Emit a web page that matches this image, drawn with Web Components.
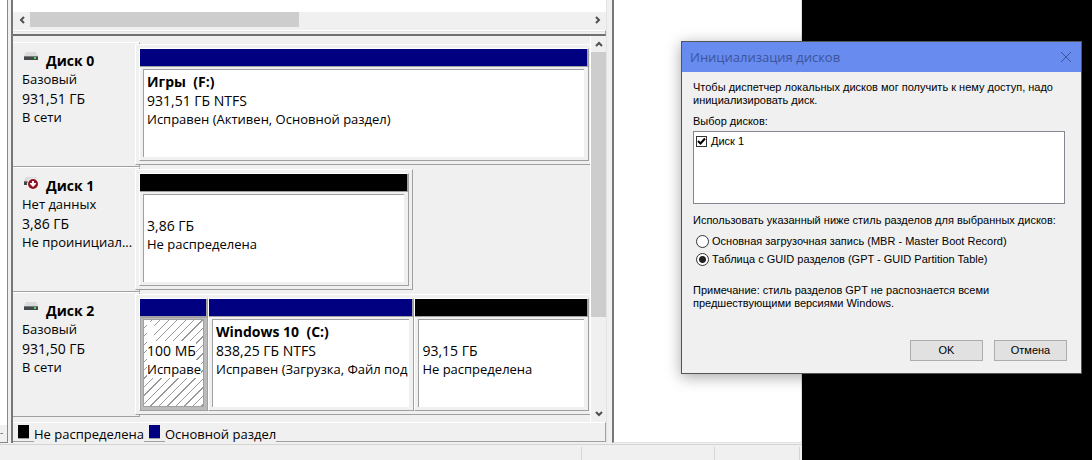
<!DOCTYPE html>
<html lang="ru">
<head>
<meta charset="utf-8">
<title>Управление дисками</title>
<style>
html, body { height: 100%; margin: 0; }
body { background: #000; color: #000; font: 13px/19px "Open Sans", "Noto Sans", sans-serif; overflow: hidden; }
</style>
</head>
<body>
<disk-desktop></disk-desktop>
<script>
function define(name, html, setup) {
  const template = document.createElement('template');
  template.innerHTML = '<style>*{box-sizing:border-box}:host{box-sizing:border-box}</style>' + html;
  customElements.define(name, class extends HTMLElement {
    connectedCallback() {
      if (this.shadowRoot) return;
      this.attachShadow({ mode: 'open' }).append(template.content.cloneNode(true));
      if (setup) setup(this, this.shadowRoot);
    }
  });
}

define('scroll-bar', `
<style>
:host { display: flex; background: #f0f0f0; }
:host([vertical]) { flex-direction: column; width: 16px; border-left: 1px solid #fff; }
button { flex: none; display: grid; place-items: center; width: 17px; height: 15px; padding: 0; border: 0; background: none; }
:host([vertical]) button { width: 15px; height: 16px; }
.thumb { background: #cdcdcd; flex: var(--thumb, 1); }
.rest { flex: var(--rest, 1); }
svg { fill: none; stroke: #505050; stroke-width: 2; }
:host([vertical]) svg { transform: rotate(90deg); }
</style>
<button aria-label="Назад"><svg width="8" height="8"><path d="M6 1L3 4L6 7"/></svg></button>
<div class="thumb"></div><div class="rest"></div>
<button aria-label="Вперёд"><svg width="8" height="8"><path d="M2 1L5 4L2 7"/></svg></button>`);

define('drive-icon', `
<style>
:host { display: block; width: 14px; height: 10px; }
svg { display: block; overflow: visible; }
.alert { display: none; }
:host([offline]) .alert { display: block; }
</style>
<svg width="14" height="10" viewBox="0 0 14 10">
<path d="M2 0H12L14 4H0Z" fill="#d9dbdc"/>
<rect y="4" width="14" height="4" fill="#44484b"/><rect y="4" width="14" height="1" fill="#777b7e"/>
<rect x="10" y="5" width="2" height="2" fill="#45e052"/>
<g class="alert"><rect x="4" y="3" width="11" height="6" fill="#f0f0f0"/><circle cx="9" cy="7" r="6" fill="#f7f7f7"/><circle cx="9" cy="7" r="5" fill="#95111d"/><path d="M8 4H10V6H12V7L9 10L6 7V6H8Z" fill="#fff"/></g>
</svg>`);

define('disk-volume', `
<style>
:host { display: flex; flex-direction: column; min-width: 0; border: 1px solid #a0a0a0; border-top-color: #fff; border-left-color: #fff; }
.bar { height: 18px; background: var(--bar, #000080); border-bottom: 1px solid #a0a0a0; border-right: 1px solid #a0a0a0; }
.frame { flex: 1; display: flex; padding: 2px 4px 3px 3px; background: #f0f0f0; }
.body { flex: 1; min-width: 0; padding: 2px 0 0 3px; overflow: hidden; white-space: pre; background: #fff; border-left: 1px solid #a0a0a0; border-top: 1px solid #a0a0a0; }
.name { font-size: 14px; font-weight: bold; }
.size { font-size: 14px; }
.body div { height: 19px; }
:host([free]) { --bar: #000; }
:host([selected]) .frame { background: #bbb; padding: 2px 3px 3px; box-shadow: inset 1px 1px #a0a0a0; }
:host([selected]) .body { border: 1px solid #a0a0a0; background: repeating-linear-gradient(135deg, #fff 0 5px, #999 5px 6px); }
:host([selected]) span { background: #fff; }
</style>
<div class="bar"></div>
<div class="frame"><div class="body"><div class="name"><span></span></div><div class="size"><span></span></div><div class="state"><span></span></div></div></div>`,
(host, root) => {
  for (const key of ['name', 'size', 'state']) root.querySelector('.' + key + ' span').textContent = host.getAttribute(key) || '';
});

define('disk-row', `
<style>
:host { display: flex; height: 125px; overflow: hidden; }
.info { flex: none; width: 127px; padding: 8px 0 0 9px; border: 1px solid #a0a0a0; border-top-color: #fff; border-left: 0; white-space: nowrap; }
.title { display: flex; font-size: 14px; font-weight: bold; }
.title drive-icon { margin: 1px 8px 0 2px; }
.info p { margin: 0; }
.info .size { font-size: 14px; }
.graph { position: relative; flex: 1; min-width: 0; display: flex; margin: 2px 0 2px -5px; padding: 3px 1px 3px 3px; background: #f0f0f0; border: 1px solid #fff; border-right: 0; border-bottom-color: #a0a0a0; }
:host([short]) .graph { flex: 0 0 278px; padding-right: 3px; border-right: 1px solid #a0a0a0; }
</style>
<div class="info"><div class="title"><drive-icon></drive-icon><span></span></div><p class="kind"></p><p class="size"></p><p class="state"></p></div>
<div class="graph"><slot></slot></div>`,
(host, root) => {
  root.querySelector('.title span').textContent = host.getAttribute('name');
  for (const key of ['kind', 'size', 'state']) root.querySelector('.' + key).textContent = host.getAttribute(key);
  if (host.hasAttribute('short')) root.querySelector('drive-icon').setAttribute('offline', '');
});

define('legend-bar', `
<style>
:host { display: flex; gap: 5px; height: 20px; padding-left: 5px; border: 1px solid #a0a0a0; border-left: 0; border-top-color: #fff; }
i { width: 11px; height: 13px; margin-top: 2px; background: #000; box-shadow: 0 1px #a0a0a0; }
.primary { background: #000080; }
span { height: 19px; line-height: 22px; background: #f0f0f0; }
</style>
<i></i><span>Не распределена</span><i class="primary"></i><span>Основной раздел</span>`);

define('disk-manager', `
<style>
:host { display: flex; flex-direction: column; min-height: 100vh; background: #f0f0f0; }
.panes { display: flex; flex: 1; }
.tree { flex: none; display: flex; flex-direction: column; width: 8px; margin-right: 3px; background: #fff; border-right: 1px solid #888; border-bottom: 1px solid #888; }
.tree::after { content: "-"; margin-top: auto; height: 17px; line-height: 14px; background: #f0f0f0; font-size: 10px; color: #666; }
.center { flex: 1; min-width: 0; border-left: 2px solid #777; border-right: 1px solid #e3e3e3; }
.volumes { height: 12px; background: #fff; }
.list-scroll { --thumb: 269; --rest: 291; margin-bottom: 3px; }
.splitter { height: 6px; border: 1px solid #a0a0a0; border-left: 0; border-top: 1px solid #fff; border-bottom: 2px solid #707070; box-shadow: inset 0 1px #e3e3e3; }
.map { display: flex; }
.rows { flex: 1; min-width: 0; padding: 6px 0 5px; }
.map scroll-bar { --thumb: 264; --rest: 89; height: 386px; }
.actions { flex: none; width: 190px; margin-left: 5px; background: #fff; border-left: 2px solid #777; border-right: 1px solid #ddd; border-bottom: 1px solid #e3e3e3; }
.status { display: flex; height: 16px; padding-top: 2px; margin-top: 1px; border-top: 1px solid #d5d5d5; }
.status div { flex: 1; border-right: 1px solid #d5d5d5; }
.status div:nth-child(2) { flex: 0 0 133px; }
.status div:nth-child(3) { flex: 0 0 85px; margin-right: 2px; }
</style>
<div class="panes">
  <div class="tree"></div>
  <div class="center">
    <div class="volumes"></div>
    <scroll-bar class="list-scroll"></scroll-bar>
    <div class="splitter"></div>
    <div class="map">
      <div class="rows">
        <disk-row name="Диск 0" kind="Базовый" size="931,51 ГБ" state="В сети">
          <disk-volume style="flex:1" name="Игры  (F:)" size="931,51 ГБ NTFS" state="Исправен (Активен, Основной раздел)"></disk-volume>
        </disk-row>
        <disk-row short name="Диск 1" kind="Нет данных" size="3,86 ГБ" state="Не проинициал...">
          <disk-volume free style="flex:1" size="3,86 ГБ" state="Не распределена"></disk-volume>
        </disk-row>
        <disk-row name="Диск 2" kind="Базовый" size="931,50 ГБ" state="В сети">
          <disk-volume selected style="flex:0 0 69px" name="  " size="100 МБ" state="Исправе"></disk-volume>
          <disk-volume style="flex:206 0 0" name="Windows 10  (C:)" size="838,25 ГБ NTFS" state="Исправен (Загрузка, Файл под"></disk-volume>
          <disk-volume free style="flex:174 0 0" size="93,15 ГБ" state="Не распределена"></disk-volume>
        </disk-row>
      </div>
      <scroll-bar vertical></scroll-bar>
    </div>
    <legend-bar></legend-bar>
  </div>
  <div class="actions"></div>
</div>
<div class="status"><div></div><div></div><div></div></div>`);

define('init-dialog', `
<style>
:host { display: block; border: 1px solid #555; background: #f0f0f0; box-shadow: 0 3px 14px rgba(0,0,0,.35); font: 11px/13px "Liberation Sans", Arial, sans-serif; }
header { display: flex; align-items: center; height: 30px; padding: 0 9px 0 8px; background: #678bef; color: #3d549b; font: 13px/18px "Open Sans", sans-serif; }
h1 { flex: 1; margin: 0; font: inherit; }
.close { display: grid; padding: 0; border: 0; background: none; }
.close svg { stroke: #3d549b; fill: none; }
main { padding: 9px 14px 12px 11px; }
p { margin: 0; }
.caption { margin: 8px 0 3px; }
.list { height: 73px; margin-right: 2px; padding: 3px 2px; background: #fff; border: 1px solid #828790; }
label { display: flex; align-items: center; }
input { appearance: none; flex: none; margin: 0; background: #fff; border: 1px solid #333; }
.list input { width: 11px; height: 11px; margin-right: 4px; background: #fff url('data:image/svg+xml,<svg xmlns="http://www.w3.org/2000/svg" viewBox="0 0 9 9"><path d="M1 4L3.500 6.500L8 1.500" fill="none" stroke="black" stroke-width="2"/></svg>') center / 9px 9px; }
.question { margin: 10px 0 5px; }
.choice { height: 18px; padding-left: 3px; }
.choice input { width: 13px; height: 13px; margin-right: 3px; border-radius: 50%; }
.choice input:checked { background: radial-gradient(circle, #222 0 3px, #fff 4px); }
.note { margin: 16px 0 30px; }
footer { display: flex; justify-content: flex-end; gap: 11px; }
footer button { width: 73px; height: 21px; padding: 0; background: #e1e1e1; border: 1px solid #adadad; font: inherit; color: #000; }
</style>
<header><h1>Инициализация дисков</h1><button class="close" aria-label="Закрыть"><svg width="12" height="12"><path d="M1 1L11 11M11 1L1 11"/></svg></button></header>
<main>
<p>Чтобы диспетчер локальных дисков мог получить к нему доступ, надо<br>инициализировать диск.</p>
<p class="caption">Выбор дисков:</p>
<div class="list"><label><input type="checkbox" checked>Диск 1</label></div>
<p class="question">Использовать указанный ниже стиль разделов для выбранных дисков:</p>
<label class="choice"><input type="radio" name="style">Основная загрузочная запись (MBR - Master Boot Record)</label>
<label class="choice"><input type="radio" name="style" checked>Таблица с GUID разделов (GPT - GUID Partition Table)</label>
<p class="note">Примечание: стиль разделов GPT не распознается всеми<br>предшествующими версиями Windows.</p>
<footer><button>OK</button><button>Отмена</button></footer>
</main>`);

define('disk-desktop', `
<style>
:host { display: block; position: relative; }
disk-manager { margin-right: 290px; }
init-dialog { position: absolute; top: 41px; right: 10px; width: 401px; }
</style>
<disk-manager></disk-manager>
<init-dialog></init-dialog>`);
</script>
</body>
</html>
